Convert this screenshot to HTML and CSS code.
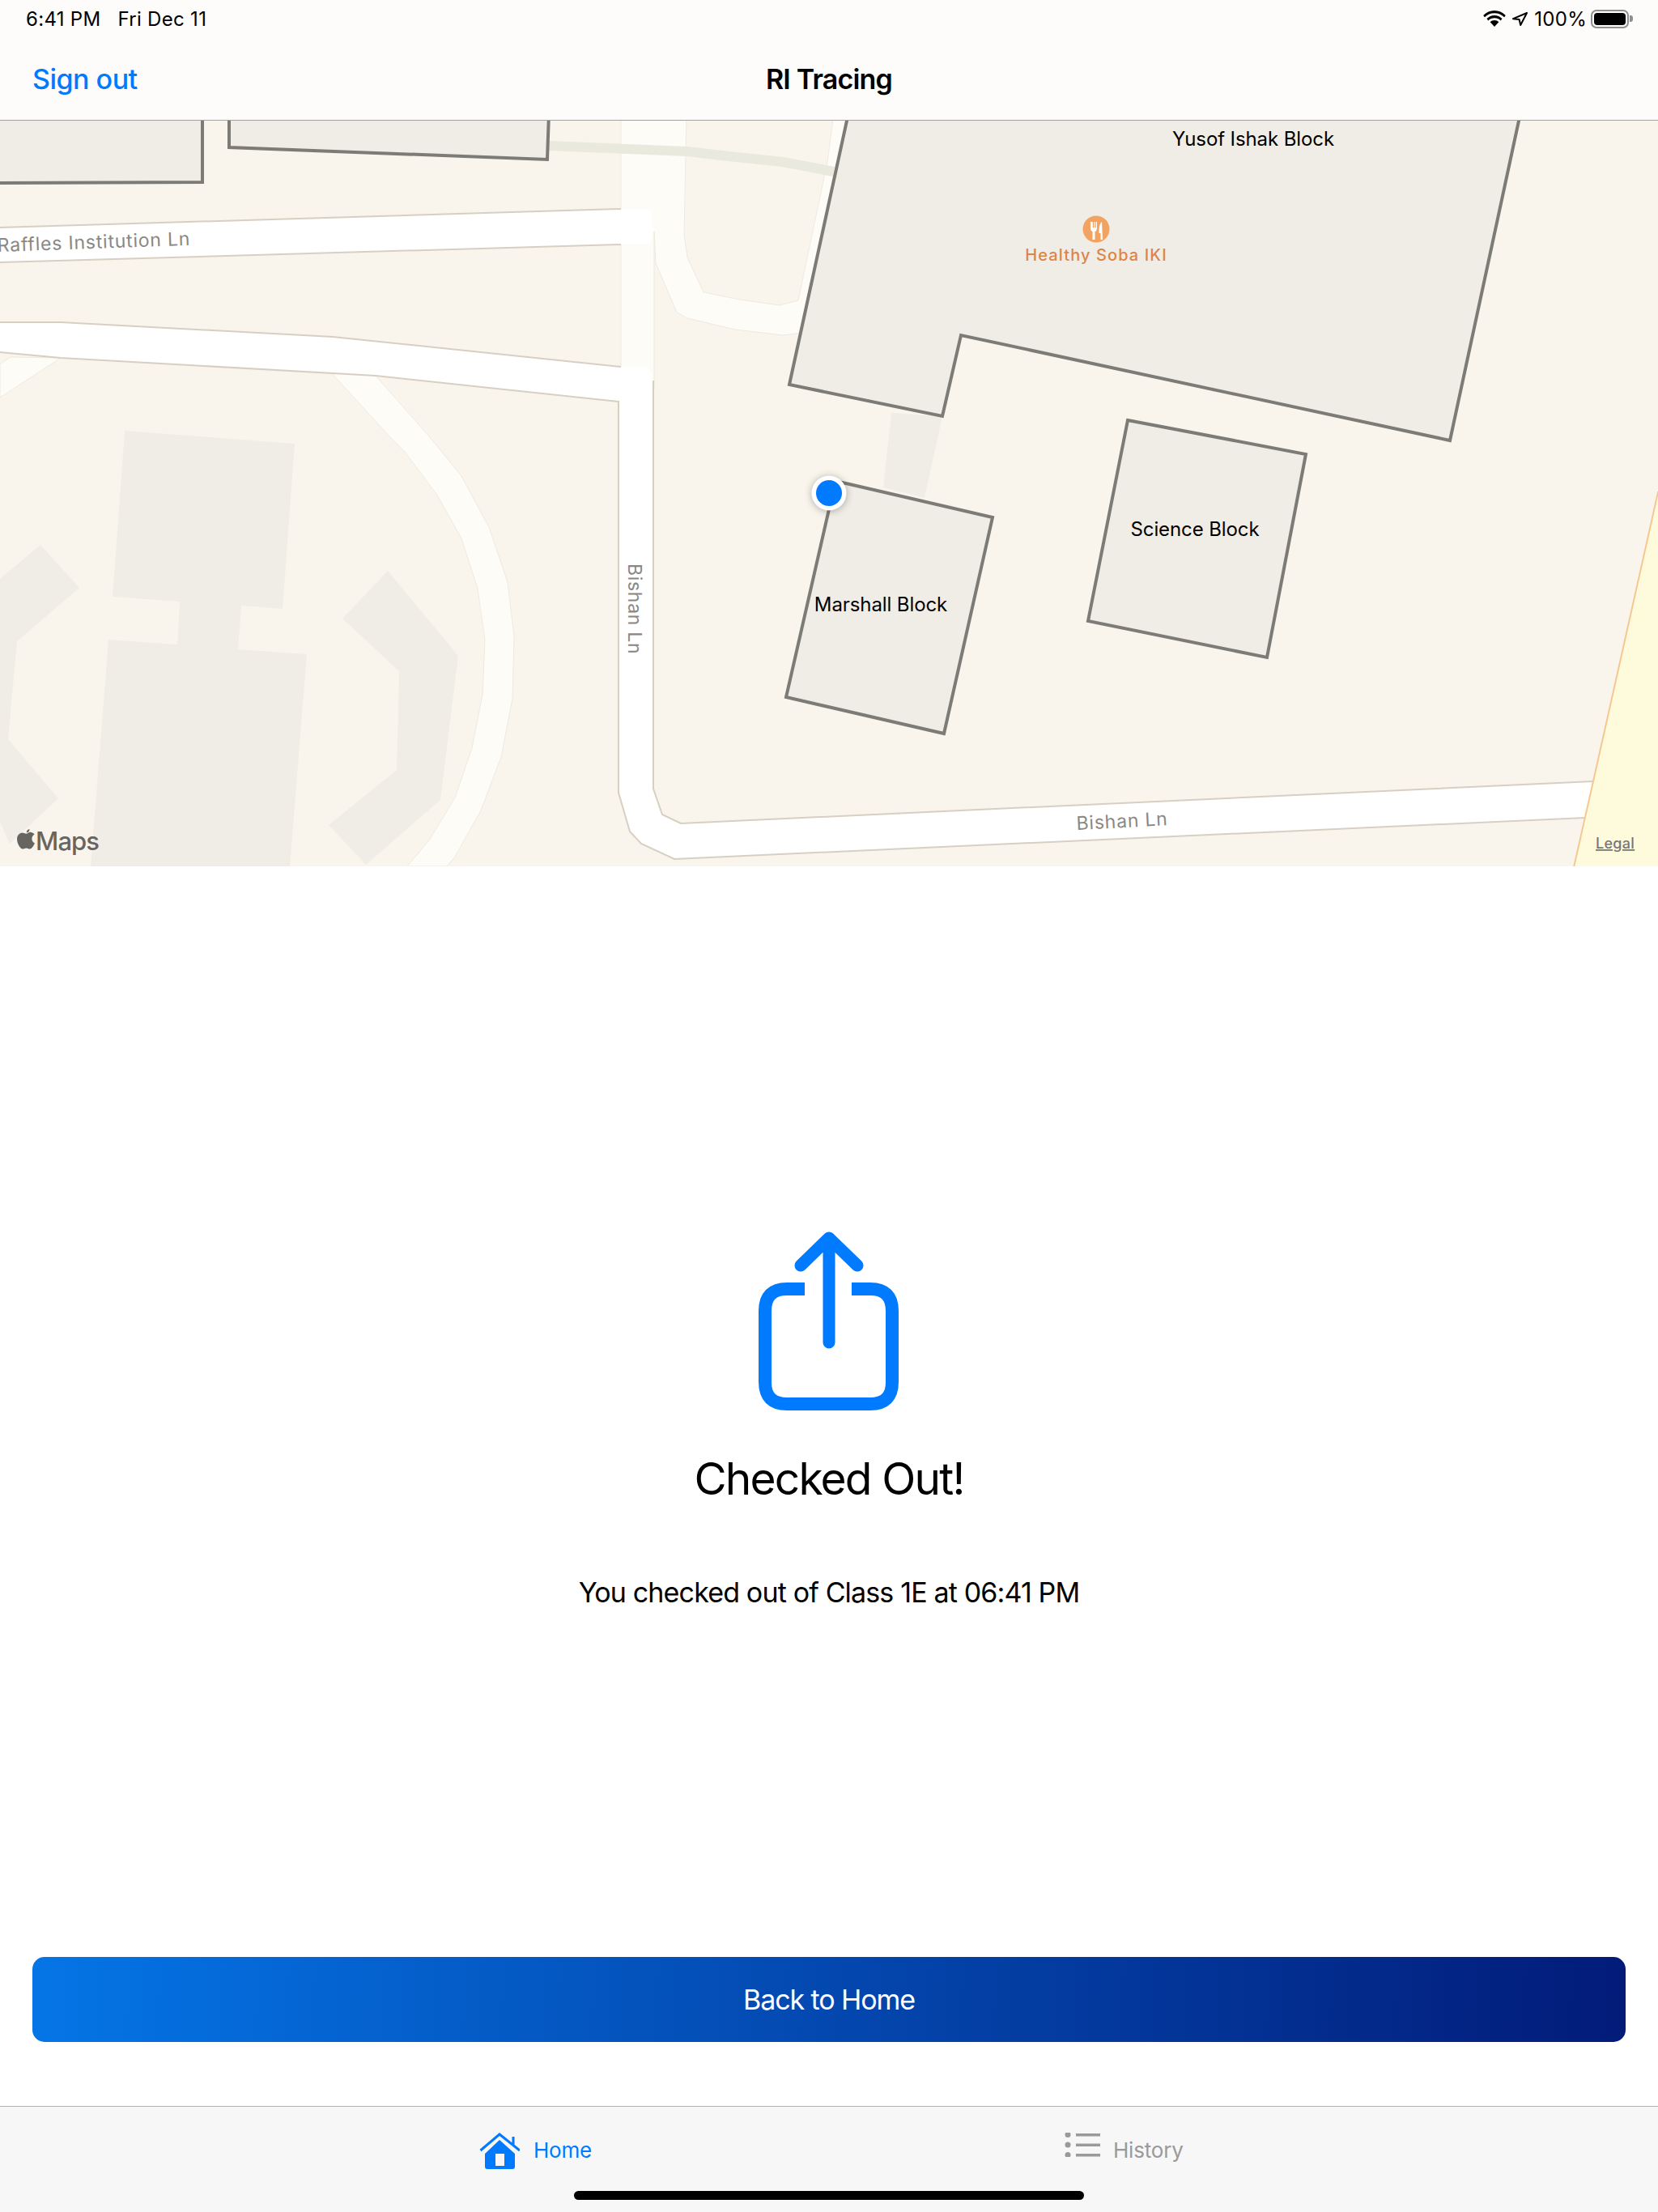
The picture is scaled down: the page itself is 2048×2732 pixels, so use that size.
FILE: index.html
```html
<!DOCTYPE html>
<html lang="en">
<head>
<meta charset="utf-8">
<title>RI Tracing</title>
<link rel="stylesheet" href="styles.css">
</head>
<body>
<div class="app">
  <header class="top">
    <div class="status">
      <div class="status-left"><span>6:41 PM</span><span>Fri Dec 11</span></div>
      <div class="status-right">
        <svg class="wifi" width="28" height="20" viewBox="0 0 28 20"><path d="M14 3.2c4.8 0 9 1.900 12.100 5l1.700-2.200C24.100 2.300 19.300 0 14 0S3.900 2.300.200 6l1.700 2.200c3.100-3.100 7.300-5 12.100-5z"/><path d="M14 9.200c3 0 5.700 1.200 7.700 3.200l1.800-2.300C21 7.600 17.700 6 14 6S7 7.600 4.500 10.100l1.800 2.300c2-2 4.700-3.200 7.700-3.200z"/><path d="M14 12c-2.100 0-4 .9-5.300 2.200L14 20l5.300-5.800C18 12.900 16.100 12 14 12z"/></svg>
        <svg class="loc" width="19" height="17" viewBox="0 0 19 17"><path d="M18 1 1 8.200l7.600.8 1.600 7z" fill="none" stroke="#000" stroke-width="2" stroke-linejoin="round"/></svg>
        <span class="pct">100%</span>
        <span class="battery"><span class="battery-fill"></span></span>
        <span class="battery-nub"></span>
      </div>
    </div>
    <nav class="navbar">
      <a class="signout">Sign out</a>
      <span class="title">RI Tracing</span>
      <span></span>
    </nav>
  </header>

  <svg class="map" width="2048" height="921" viewBox="0 149 2048 921">
    <rect x="0" y="148" width="2048" height="922" class="land"/>

    <polygon class="faint" points="154,532 364,548 349,752 298,748 294,802 379,808 358,1070 112,1070 134,790 219,796 222,743 139,737"/>
    <polygon class="faint" points="0,715 50,673 98,726 21,792 10,913 72,986 12,1042 0,1015"/>
    <polygon class="faint" points="479,705 566,810 544,988 452,1068 406,1019 490,951 493,829 423,764"/>

    <path class="lane" d="M408 459 464 464 531 540 570 588 604 651 627 719 635 786 633 863 619 935 594 1001 562 1058 552 1070H503L530 1038 562 985 583 924 596 858 599 790 590 727 570 665 539 610 500 558 482 540z"/>
    <path class="lane" d="M13 441 75 442 0 491V450z"/>
    <path class="lane" d="M767 140H848L845 289 849 318 869 361 914 370 963 377 986 371 1022 200 1030 140H1046L1000 410 967 414 908 407 849 393 836 386 810 325 808 286V480H767z"/>
    <path class="path-green" d="M678 180 849 187 900 193 967 200 1030 212"/>
    <polygon class="faint" points="1101,510 1164,514 1142,615 1091,602"/>

    <path class="road-cap" d="M0 281 767 258 796 258Q806 258 806 268V292Q806 302 796 302L767 302 0 324z"/>
    <path class="road-edge" d="M0 281 767 258"/>
    <path class="road-edge" d="M0 324 767 302"/>

    <path class="road-fill" d="M0 398 75 398 411 416 767 453 796 453Q806 455 807 470V974L818 1006 841 1017 1968 965 1958 1010 833 1061 792 1042 778 1027 764 979V496L464 464 75 442 0 435z"/>
    <path class="road-edge" d="M0 398 75 398 411 416 767 453"/>
    <path class="road-edge" d="M0 435 75 442 464 464 764 496V979L778 1027 792 1042 833 1061 1958 1010"/>
    <path class="road-edge" d="M807 470V974L818 1006 841 1017 1968 965"/>

    <polygon class="park" points="2048,608 2060,608 2060,1080 1942,1080 1968,965"/>

    <polygon class="block" points="-10,140 250,140 250,225 -10,226"/>
    <polygon class="block" points="283,140 678,140 676,197 283,182"/>
    <polygon class="block" points="1048,140 1878,140 1791,544 1187,414 1164,514 975,475"/>
    <polygon class="block" points="1032,594 1226,639 1166,906 971,861"/>
    <polygon class="block" points="1393,519 1613,561 1565,812 1344,767"/>

    <text class="lbl-road" transform="translate(-3 311) rotate(-2)">Raffles Institution Ln</text>
    <text class="lbl-road" transform="translate(1330 1025) rotate(-3)">Bishan Ln</text>
    <text class="lbl-road lbl-wide" transform="translate(776 696) rotate(90)">Bishan Ln</text>
    <text class="lbl-block" x="1548" y="180" text-anchor="middle">Yusof Ishak Block</text>
    <text class="lbl-block" x="1476" y="662" text-anchor="middle">Science Block</text>
    <text class="lbl-block" x="1088" y="755" text-anchor="middle">Marshall Block</text>

    <circle cx="1354" cy="283" r="16.500" fill="#f2a361"/>
    <path d="M1347 274v8q0 3 2.500 4v10h3v-10q2.500-1 2.500-4v-8h-1.300v7h-1.300v-7h-1.200v7h-1.400v-7zM1361 274q-3.500 3-3.500 11v3h2v8h2.500z" fill="#fff"/>
    <text class="lbl-poi" x="1354" y="322" text-anchor="middle">Healthy Soba IKI</text>

    <circle class="pin-white" cx="1024" cy="609" r="21.500"/>
    <circle cx="1024" cy="609" r="16" fill="#007aff"/>

    <path class="apple" d="M36.500 1024c-2 .2-3.900 2-3.700 4.300 2.100.1 3.900-2 3.700-4.300zM32.500 1029.500c-1.900 0-3.300-1.100-4.800-1.100-3.100 0-6.700 2.800-6.700 7.800 0 5.500 3.900 12.300 7.200 12.300 1.300 0 2.600-1.100 4.300-1.100 1.700 0 2.700 1.100 4.300 1.100 2.900 0 5.200-4.800 6.100-7.200-4.300-1.900-4.800-8.400-.3-10.800-1.400-2-3.400-2.800-5.200-2.800-2 0-3.700 2-5 2z"/>
    <text class="lbl-maps" x="44" y="1050">Maps</text>
    <text class="lbl-legal" x="1971" y="1048">Legal</text>
  </svg>

  <main class="content">
    <svg class="share" width="190" height="237" viewBox="929 1513 190 237">
      <path d="M994 1592H972Q945 1592 945 1619V1707Q945 1734 972 1734H1075Q1102 1734 1102 1707V1619Q1102 1592 1075 1592H1052" fill="none" stroke="#007aff" stroke-width="16"/>
      <path d="M1024 1658V1530M989 1563 1024 1529 1059 1563" fill="none" stroke="#007aff" stroke-width="15" stroke-linecap="round" stroke-linejoin="round"/>
    </svg>
    <h1 class="heading">Checked Out!</h1>
    <p class="message">You checked out of Class 1E at 06:41 PM</p>
    <button class="home-btn">Back to Home</button>
  </main>

  <footer class="tabbar">
    <div class="tabs">
      <a class="tab tab-active">
        <svg width="50" height="45" viewBox="592 2634 50 45"><path d="M593.500 2656 617 2636 642 2656M634 2639V2650" fill="none" stroke="#007aff" stroke-width="3"/><path d="M617 2643 636 2660V2676Q636 2679 633 2679H602Q599 2679 599 2676V2660zM612 2660V2675H623V2660z" fill="#007aff" fill-rule="evenodd"/></svg>
        <span>Home</span>
      </a>
      <a class="tab">
        <svg width="44" height="30" viewBox="1315 2634 44 30"><g fill="#9a9a9a"><circle cx="1319" cy="2636.500" r="3.500"/><circle cx="1319" cy="2649" r="3.500"/><circle cx="1319" cy="2661.500" r="3.500"/><rect x="1329" y="2635" width="30" height="3.500"/><rect x="1329" y="2647.500" width="30" height="3.500"/><rect x="1329" y="2660" width="30" height="3.500"/></g></svg>
        <span>History</span>
      </a>
    </div>
    <div class="indicator"></div>
  </footer>
</div>
</body>
</html>
```
FILE: styles.css
```css
* { box-sizing: border-box; }
html, body { margin: 0; padding: 0; }
body { background: #fff; font-family: Inter, "Liberation Sans", sans-serif; color: #000; }

.app { width: 2048px; height: 2732px; display: flex; flex-direction: column; overflow: hidden; }

.top { height: 149px; flex: none; background: #fdfcfa; border-bottom: 1px solid #a3a2a0; }
.status { height: 50px; display: flex; justify-content: space-between; align-items: center; padding: 0 31px 4px 32px; font-size: 24px; font-weight: 400; letter-spacing: .3px; }
.status-left { display: flex; gap: 21px; }
.status-right { display: flex; align-items: center; }
.wifi { margin-right: 8px; }
.loc { margin-right: 8px; }
.pct { margin-right: 5px; }
.battery { width: 47px; height: 23px; border: 2px solid #8f8f8f; border-radius: 7px; padding: 2px; display: block; }
.battery-fill { display: block; height: 100%; background: #000; border-radius: 4px; }
.battery-nub { width: 4px; height: 8px; background: #8f8f8f; border-radius: 0 3px 3px 0; margin-left: 1px; }

.navbar { height: 98px; display: grid; grid-template-columns: 1fr auto 1fr; align-items: center; padding: 0 40px 3px; }
.signout { font-size: 34px; color: #007aff; font-weight: 500; letter-spacing: -.5px; }
.title { font-size: 34px; font-weight: 600; letter-spacing: -.8px; }

.map { display: block; flex: none; }
.land { fill: #f9f5ed; }
.faint { fill: #f0ede6; }
.lane { fill: #fefcf7; stroke: #eeeae2; stroke-width: 1; }
.path-green { fill: none; stroke: #e9e9dd; stroke-width: 12; }
.road-cap { fill: #fff; stroke: none; }
.road-fill { fill: #fff; }
.road-edge { fill: none; stroke: #d8cfc3; stroke-width: 2; }
.park { fill: #fefbdd; stroke: #f5c88f; stroke-width: 2; }
.block { fill: #f0ede6; stroke: #7d7b75; stroke-width: 4; stroke-linejoin: miter; }

.lbl-road { font-size: 23px; fill: #8a8884; letter-spacing: .8px; }
.lbl-wide { letter-spacing: .7px; }
.lbl-block { font-size: 24px; fill: #000; letter-spacing: -.1px; }
.lbl-poi { font-size: 20px; fill: #de8449; letter-spacing: 1.100px; font-weight: 500; }
.pin-white { fill: #fff; filter: drop-shadow(0 1px 5px rgba(0,0,0,.3)); }
.apple { fill: #666560; }
.lbl-maps { font-size: 31px; fill: #666560; letter-spacing: -.9px; font-weight: 500; }
.lbl-legal { font-size: 18px; fill: #777; text-decoration: underline; font-weight: 500; letter-spacing: .3px; }

.content { flex: 1; min-height: 0; display: flex; flex-direction: column; align-items: center; padding: 443px 40px 79px; }
.share { display: block; flex: none; }
.heading { margin: 40px 0 0; font-size: 55px; line-height: 72px; font-weight: 400; letter-spacing: -1.800px; }
.message { margin: 83px 0 0; font-size: 34px; line-height: 44px; letter-spacing: -.85px; }
.home-btn { margin-top: auto; width: 100%; height: 105px; border: 0; border-radius: 15px; background: linear-gradient(92deg, #0575e6, #021b79); color: #fff; font: 400 34px Inter, "Liberation Sans", sans-serif; letter-spacing: -1.100px; }

.tabbar { height: 131px; flex: none; background: #f7f7f7; border-top: 1px solid #b2b2b2; display: flex; flex-direction: column; align-items: center; }
.tabs { display: flex; height: 104px; padding-top: 32px; width: 100%; }
.tab { flex: none; display: flex; align-items: flex-start; color: #9a9a9a; font-size: 26px; }
.tab span { line-height: 44px; letter-spacing: -.2px; }
.tab-active { color: #007aff; margin-left: 592px; width: 723px; gap: 17px; }
.tab:not(.tab-active) { gap: 16px; }
.indicator { width: 630px; height: 11px; border-radius: 6px; background: #000; }
```
